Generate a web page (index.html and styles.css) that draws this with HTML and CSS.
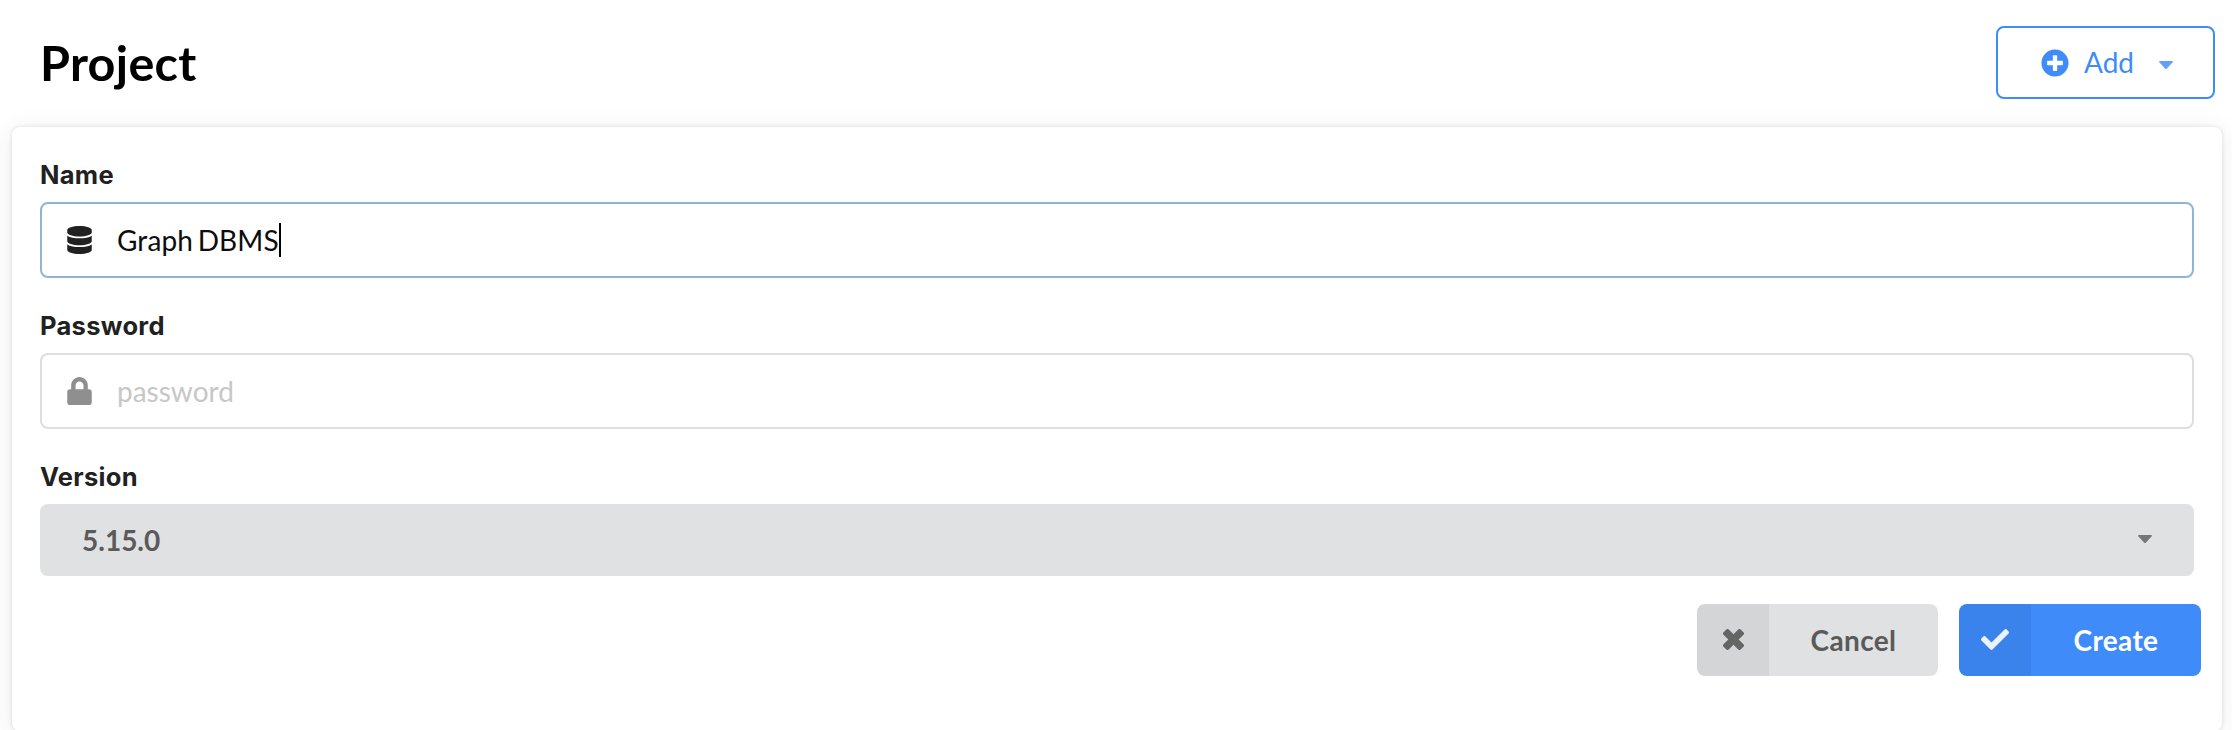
FILE: index.html
```html
<!DOCTYPE html>
<html lang="en">
<head>
<meta charset="utf-8">
<title>Project</title>
<link rel="stylesheet" href="styles.css">
</head>
<body>
<header class="header">
  <h1 class="title">Project</h1>
  <button class="add" type="button">
    <svg class="add-icon" viewBox="0 0 512 512"><path fill="currentColor" d="M256 8C119 8 8 119 8 256s111 248 248 248 248-111 248-248S393 8 256 8zm144 276c0 6.600-5.400 12-12 12h-92v92c0 6.600-5.400 12-12 12h-56c-6.600 0-12-5.400-12-12v-92h-92c-6.600 0-12-5.400-12-12v-56c0-6.600 5.400-12 12-12h92v-92c0-6.600 5.400-12 12-12h56c6.600 0 12 5.400 12 12v92h92c6.600 0 12 5.400 12 12v56z"/></svg>
    <span class="add-label">Add</span>
    <svg class="caret" viewBox="0 0 14 9"><path fill="currentColor" d="M.8 0h12.400q1.200.3.500 1.300L8 7.500Q7 8.500 6 7.500L.3 1.300Q-.4.300.8 0z"/></svg>
  </button>
</header>
<main class="card">
  <div class="label">Name</div>
  <div class="input focused">
    <svg class="input-icon" viewBox="0 0 448 512"><path fill="currentColor" d="M448 73.143v45.714C448 159.143 347.667 192 224 192S0 159.143 0 118.857V73.143C0 32.857 100.333 0 224 0s224 32.857 224 73.143zM448 176v102.857C448 319.143 347.667 352 224 352S0 319.143 0 278.857V176c48.125 33.143 136.208 48.572 224 48.572S399.874 209.143 448 176zm0 160v102.857C448 479.143 347.667 512 224 512S0 479.143 0 438.857V336c48.125 33.143 136.208 48.572 224 48.572S399.874 369.143 448 336z"/></svg>
    <span class="value">Graph DBMS</span><span class="cursor"></span>
  </div>
  <div class="label">Password</div>
  <div class="input">
    <svg class="input-icon" viewBox="0 0 448 512"><path fill="currentColor" d="M400 224h-24v-72C376 68.200 307.800 0 224 0S72 68.200 72 152v72H48c-26.500 0-48 21.500-48 48v192c0 26.500 21.500 48 48 48h352c26.500 0 48-21.500 48-48V272c0-26.500-21.500-48-48-48zm-104 0H152v-72c0-39.700 32.300-72 72-72s72 32.300 72 72v72z"/></svg>
    <span class="placeholder">password</span>
  </div>
  <div class="label">Version</div>
  <div class="select">
    <span class="version">5.15.0</span>
    <svg class="caret" viewBox="0 0 14 9"><path fill="currentColor" d="M.8 0h12.400q1.200.3.500 1.300L8 7.500Q7 8.500 6 7.500L.3 1.300Q-.4.300.8 0z"/></svg>
  </div>
  <div class="actions">
    <button class="btn cancel" type="button">
      <span class="btn-icon"><svg class="cross" viewBox="-10.500 -10.500 21 21"><g fill="currentColor" transform="rotate(45)"><rect x="-12.100" y="-3.700" width="24.200" height="7.400" rx="1.700"/><rect x="-3.700" y="-12.100" width="7.400" height="24.200" rx="1.700"/></g></svg></span>
      <span class="btn-label">Cancel</span>
    </button>
    <button class="btn create" type="button">
      <span class="btn-icon"><svg class="check" viewBox="0 65 512 382"><path fill="currentColor" d="M173.898 439.404l-166.400-166.400c-9.997-9.997-9.997-26.206 0-36.204l36.203-36.204c9.997-9.998 26.207-9.998 36.204 0L192 312.690 432.095 72.596c9.997-9.997 26.207-9.997 36.204 0l36.203 36.204c9.997 9.997 9.997 26.206 0 36.204l-294.400 294.401c-9.998 9.997-26.207 9.997-36.204-.001z"/></svg></span>
      <span class="btn-label">Create</span>
    </button>
  </div>
</main>
</body>
</html>
```
FILE: styles.css
```css
* { box-sizing: border-box; }
html, body { height: 100%; }
body {
  margin: 0;
  overflow: hidden;
  background: #fff;
  color: #000;
  font-family: Lato, sans-serif;
  font-size: 28px;
}
svg { display: block; flex: none; }
button { font: inherit; margin: 0; padding: 0; border: 0; }
.header {
  height: 127px;
  padding: 26px 17px 0 40px;
  display: flex;
  justify-content: space-between;
  align-items: flex-start;
}
.title { margin: 7px 0 0; font-size: 48.500px; line-height: 58px; font-weight: 700; letter-spacing: .3px; }
.add {
  width: 219px;
  height: 73px;
  padding-left: 43px;
  display: flex;
  align-items: center;
  background: #fff;
  border: 2px solid #3e8bf9;
  border-radius: 8px;
  color: #3e8bf9;
}
.add-icon { width: 28px; height: 28px; }
.add-label { margin-left: 15px; width: 50px; padding-bottom: 2px; text-align: left; }
.caret { width: 14px; height: 9px; }
.add .caret { margin: 5px 0 0 25px; opacity: .8; }
.card {
  width: 2210px;
  height: 604px;
  margin-left: 12px;
  padding: 30px 28px 0;
  background: #fff;
  border-radius: 8px;
  box-shadow: 0 0 4px rgba(34, 36, 38, .14), 0 4px 26px rgba(34, 50, 40, .09);
}
.label {
  height: 45px;
  padding-top: 2px;
  color: #212121;
  font: 700 25.500px/32px Inter, sans-serif;
  letter-spacing: .3px;
}
.input {
  height: 76px;
  margin-bottom: 30px;
  padding-left: 25px;
  display: flex;
  align-items: center;
  border: 2px solid #dededf;
  border-radius: 8px;
  color: #8f8f8f;
}
.focused { border-color: #8eb5d6; color: #212121; }
.input-icon { width: 25px; height: 28px; margin-right: 25px; }
.value { color: #0d0d0d; letter-spacing: .1px; word-spacing: -2.500px; }
.cursor { width: 2px; height: 34px; background: #000; }
.placeholder { color: #c7c7c7; }
.select {
  height: 72px;
  padding: 0 42px;
  display: flex;
  align-items: center;
  justify-content: space-between;
  background: #e0e1e2;
  border-radius: 8px;
  color: #5a5a5a;
  font-weight: 700;
}
.select .caret { margin-bottom: 2px; color: #767676; }
.actions {
  margin: 28px -7px 0 0;
  display: flex;
  justify-content: flex-end;
  gap: 21px;
}
.btn {
  width: 242px;
  height: 72px;
  display: flex;
  overflow: hidden;
  border-radius: 8px;
  font-weight: 700;
}
.cancel { width: 241px; background: #e0e1e2; color: #5a5a5a; }
.create { background: #3e8bf9; color: #fff; }
.btn-icon {
  width: 72px;
  height: 72px;
  padding-bottom: 1px;
  flex: none;
  display: flex;
  align-items: center;
  justify-content: center;
  background: rgba(0, 0, 0, .05);
}
.cross { width: 21px; height: 21px; color: #646666; }
.check { width: 28px; height: 21px; color: #ecf3fe; }
.btn-label { flex: 1; line-height: 72px; letter-spacing: .35px; }
```
